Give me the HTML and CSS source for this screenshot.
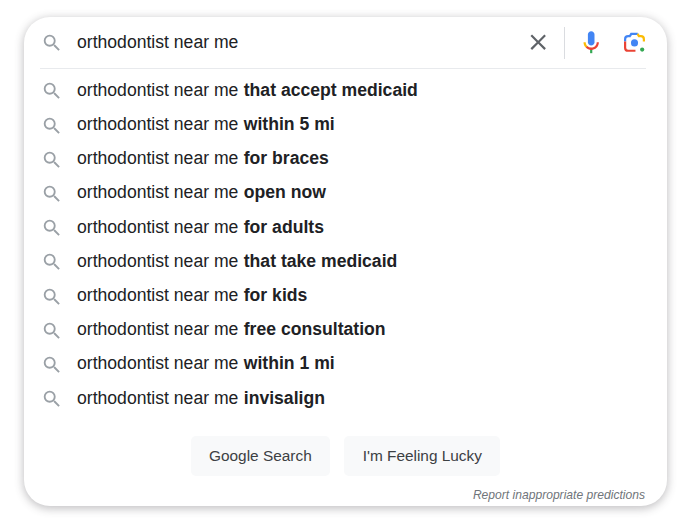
FILE: index.html
```html
<!DOCTYPE html>
<html lang="en">
<head>
    <meta charset="UTF-8">
    <meta name="viewport" content="width=device-width, initial-scale=1.0">
    <title>Google Search</title>
    <link rel="stylesheet" href="styles.css">
</head>
<body>
    <svg class="sprite" width="0" height="0">
        <symbol id="lupa" viewBox="0 0 24 24">
            <path d="M15.5 14h-.79l-.28-.27A6.471 6.471 0 0 0 16 9.5 6.5 6.5 0 1 0 9.5 16c1.61 0 3.09-.59 4.23-1.57l.27.28v.79l5 4.99L20.49 19l-4.99-5zm-6 0C7.01 14 5 11.99 5 9.5S7.01 5 9.5 5 14 7.01 14 9.5 11.99 14 9.5 14z"/>
        </symbol>
    </svg>

    <div class="card">
        <div class="search-row">
            <svg class="lupa"><use href="#lupa"/></svg>
            <span class="query">orthodontist near me</span>
            <svg class="clear" viewBox="0 0 24 24">
                <path d="M19 6.41 17.59 5 12 10.59 6.41 5 5 6.41 10.59 12 5 17.59 6.41 19 12 13.41 17.59 19 19 17.59 13.41 12z"/>
            </svg>
            <span class="divider"></span>
            <svg class="mic" viewBox="0 0 24 24">
                <path fill="#4285f4" d="m12 15c1.66 0 3-1.31 3-2.97v-7.02c0-1.66-1.34-3.01-3-3.01s-3 1.34-3 3.01v7.02c0 1.66 1.34 2.97 3 2.97z"/>
                <path fill="#34a853" d="m11 18.08h2v3.92h-2z"/>
                <path fill="#fbbc04" d="m7.05 16.87c-1.27-1.33-2.05-2.83-2.05-4.87h2c0 1.45 0.56 2.42 1.47 3.38v0.32l-1.15 1.18z"/>
                <path fill="#ea4335" d="m12 16.93a4.97 5.25 0 0 1 -3.54 -1.55l-1.41 1.49c1.26 1.34 3.02 2.13 4.95 2.13 3.87 0 6.99-2.92 6.99-7h-1.99c0 2.92-2.24 4.93-5 4.93z"/>
            </svg>
            <svg class="lens" viewBox="0 0 24 24" fill="none" stroke-width="2.3">
                <circle cx="12" cy="12.4" r="3.7" fill="#4285f4"/>
                <circle cx="20" cy="19.4" r="2.2" fill="#34a853"/>
                <path stroke="#4285f4" d="M2.2 11V8.6c0-1.9 1.4-3.2 3.2-3.2H8"/>
                <path stroke="#4285f4" d="M7.2 5.4 8.6 3h6.8"/>
                <path stroke="#fbbc04" d="M15.2 3l1.4 2.4h2c1.8 0 3.2 1.3 3.2 3.2V11"/>
                <path stroke="#ea4335" d="M2.2 11v6.4c0 1.9 1.4 3.2 3.2 3.2H13"/>
            </svg>
        </div>

        <ul class="sugestoes">
            <li><svg class="lupa"><use href="#lupa"/></svg><span>orthodontist near me <b>that accept medicaid</b></span></li>
            <li><svg class="lupa"><use href="#lupa"/></svg><span>orthodontist near me <b>within 5 mi</b></span></li>
            <li><svg class="lupa"><use href="#lupa"/></svg><span>orthodontist near me <b>for braces</b></span></li>
            <li><svg class="lupa"><use href="#lupa"/></svg><span>orthodontist near me <b>open now</b></span></li>
            <li><svg class="lupa"><use href="#lupa"/></svg><span>orthodontist near me <b>for adults</b></span></li>
            <li><svg class="lupa"><use href="#lupa"/></svg><span>orthodontist near me <b>that take medicaid</b></span></li>
            <li><svg class="lupa"><use href="#lupa"/></svg><span>orthodontist near me <b>for kids</b></span></li>
            <li><svg class="lupa"><use href="#lupa"/></svg><span>orthodontist near me <b>free consultation</b></span></li>
            <li><svg class="lupa"><use href="#lupa"/></svg><span>orthodontist near me <b>within 1 mi</b></span></li>
            <li><svg class="lupa"><use href="#lupa"/></svg><span>orthodontist near me <b>invisalign</b></span></li>
        </ul>

        <div class="btns">
            <button class="btn btn-search">Google Search</button>
            <button class="btn btn-lucky">I'm Feeling Lucky</button>
        </div>

        <p class="report">Report inappropriate predictions</p>
    </div>
</body>
</html>
```

FILE: styles.css
```css
* {
    padding: 0;
    margin: 0;
    box-sizing: border-box;
}

html {
    background-color: #fff;
    color: #202124;
    font-family: "Liberation Sans", Arial, sans-serif;
    font-size: 17.6px;
}

body {
    height: 529px;
    padding: 17px 0 0 24px;
}

.sprite {
    display: block;
}

.card {
    width: 643px;
    height: 489px;
    padding: 0 21px 0 16px;
    background-color: #fff;
    border-radius: 26px;
    box-shadow: 0 2px 8px 1px rgba(64, 60, 67, 0.3);
}

.search-row {
    display: flex;
    align-items: center;
    height: 52px;
    border-bottom: 1px solid #e8eaed;
}

.lupa {
    flex: none;
    width: 22px;
    height: 22px;
    margin: 0 14.5px 0 0.5px;
    fill: #9aa0a6;
}

.query {
    flex: 1;
}

.clear {
    width: 26.4px;
    height: 26.4px;
    fill: #5f6368;
}

.divider {
    width: 1px;
    height: 32px;
    margin: 0 13px;
    background-color: #dadce0;
}

.mic {
    width: 26.4px;
    height: 26.4px;
}

.lens {
    width: 23px;
    height: 23px;
    margin-left: 18.5px;
}

.sugestoes {
    list-style: none;
    margin-top: 4.3px;
}

.sugestoes li {
    display: flex;
    align-items: center;
    height: 34.2px;
}

.sugestoes .lupa {
    margin-top: 2px;
}

.sugestoes b {
    margin-left: 0.5px;
}

.btns {
    display: flex;
    justify-content: center;
    gap: 14px;
    margin-top: 20.7px;
    padding-left: 5px;
}

.btn {
    height: 40px;
    padding: 0 18.5px;
    border: 0;
    border-radius: 5px;
    background-color: #f8f9fa;
    color: #3c4043;
    font-family: inherit;
    font-size: 15.4px;
}

.report {
    margin-top: 12px;
    padding-right: 1px;
    color: #70757a;
    font-size: 12.1px;
    font-style: italic;
    text-align: right;
}
```
